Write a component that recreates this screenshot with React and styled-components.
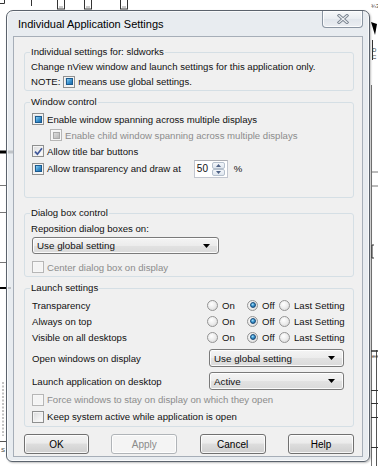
import React from 'react';
import styled, { createGlobalStyle } from 'styled-components';

const Global = createGlobalStyle`
  html, body { margin: 0; padding: 0; background: #fff; }
  body {
    font-family: "Liberation Sans", Arial, sans-serif;
    font-size: 9.6px;
    color: #111;
  }
  * { box-sizing: border-box; }
`;

const Desktop = styled.div`
  position: relative;
  width: 378px;
  height: 466px;
  overflow: hidden;
  background: #fff;
  padding: 10px 0 0 6px;
`;

const Backdrop = styled.svg`
  position: absolute;
  left: 0;
  top: 0;
`;

const Window = styled.div`
  position: relative;
  width: 364px;
  height: 452px;
  border: 1px solid #5b636d;
  border-radius: 7px 7px 6px 6px;
  background: rgba(228, 232, 237, 0.84);
  box-shadow: inset 0 0 0 1px rgba(255, 255, 255, 0.75), 1px 1px 2px rgba(0, 0, 0, 0.25);
  display: flex;
  flex-direction: column;
  padding: 0 6px 6px 6px;
`;

const TitleBar = styled.div`
  height: 25px;
  flex: none;
  display: flex;
  align-items: center;
  justify-content: space-between;
  padding-left: 5px;
`;

const Title = styled.span`
  font-size: 11px;
  color: #000;
  padding-top: 1px;
`;

const CloseButton = styled.div`
  align-self: flex-start;
  width: 41px;
  height: 17px;
  border: 1px solid #8a95a2;
  border-top: none;
  border-radius: 0 0 4px 4px;
  background: linear-gradient(#f6f8fa, #e9edf1 50%, #e1e6ec 51%, #ebeef2);
  box-shadow: inset 0 0 0 1px rgba(255, 255, 255, 0.8);
  display: flex;
  align-items: center;
  justify-content: center;
`;

const Client = styled.div`
  flex: 1;
  border: 1px solid #a6aeb8;
  background: #f0f0f0;
  padding: 9px 8px 2px 10px;
  display: flex;
  flex-direction: column;
`;

const Group = styled.fieldset`
  margin: ${p => p.$mt || 0}px 0 0 0;
  padding: ${p => p.$pt || 0}px 7px ${p => p.$pb || 0}px 7px;
  border: 1px solid #d5dfe5;
  border-radius: 3px;
  min-width: 0;
  display: flex;
  flex-direction: column;
`;

const Legend = styled.legend`
  padding: 0 1px;
  margin-left: -2px;
  line-height: 12px;
  font-size: 9.6px;
`;

const TextLine = styled.div`
  height: ${p => p.$h || 15}px;
  margin-top: ${p => p.$mt || 0}px;
  display: flex;
  align-items: center;
  gap: 3px;
  margin-left: -1px;
  color: ${p => (p.$disabled ? '#8c8c8c' : '#111')};
`;

const CheckRow = styled.div`
  height: ${p => p.$h || 16}px;
  margin-top: ${p => p.$mt || 0}px;
  padding-left: ${p => p.$indent || 0}px;
  display: flex;
  align-items: center;
  gap: 3px;
  color: ${p => (p.$disabled ? '#8c8c8c' : '#111')};
`;

const Box = styled.span`
  width: 12px;
  height: 12px;
  flex: none;
  display: inline-flex;
  align-items: center;
  justify-content: center;
  border: 1px solid ${p => (p.$disabled ? '#b6b6b6' : '#8e8f8f')};
  background: ${p =>
    p.$disabled
      ? '#f4f4f4'
      : 'linear-gradient(135deg, #d9dadb 0%, #f1f1f1 60%, #ffffff 100%)'};
  box-shadow: inset 0 0 0 1px ${p => (p.$disabled ? '#f7f7f7' : '#f4f4f4')};
`;

const Fill = styled.span`
  width: 7px;
  height: 7px;
  border: 1px solid ${p => (p.$disabled ? '#a8a8a8' : '#1c5a8e')};
  background: ${p =>
    p.$disabled
      ? 'linear-gradient(135deg, #dcdcdc, #b8b8b8)'
      : 'linear-gradient(135deg, #8ed0f2 0%, #3a92cf 55%, #1f6aa8 100%)'};
`;

const Check = ({ state, disabled }) => (
  <Box $disabled={disabled}>
    {state === 'mixed' && <Fill $disabled={disabled} />}
    {state === 'checked' && (
      <svg width="9" height="9" viewBox="0 0 9 9">
        <path d="M1 4.6 L3.4 7.2 L8 1.2" fill="none" stroke="#40589a" strokeWidth="1.7" />
      </svg>
    )}
  </Box>
);

const Spinner = styled.div`
  margin-left: 10px;
  width: 34px;
  height: 18px;
  border: 1px solid #c2c6cf;
  border-top-color: #abadb3;
  background: #fff;
  display: flex;
  align-items: center;
  justify-content: space-between;
  padding: 0 2px 0 2px;
`;

const SpinValue = styled.span`
  font-size: 10px;
`;

const SpinButtons = styled.div`
  display: flex;
  flex-direction: column;
  width: 13px;
`;

const SpinButton = styled.div`
  height: 7px;
  border: 1px solid #b5c0cd;
  border-radius: 2px;
  background: linear-gradient(#f3f6fa, #dfe6ee);
  display: flex;
  align-items: center;
  justify-content: center;
`;

const Percent = styled.span`
  margin-left: 3px;
`;

const Combo = styled.div`
  width: ${p => p.$w}px;
  height: ${p => p.$h || 18}px;
  margin-top: ${p => p.$mt || 0}px;
  border: 1px solid #7a7a7a;
  border-radius: 3px;
  background: linear-gradient(#f4f4f4 0%, #ececec 50%, #e2e2e2 51%, #dadada 100%);
  box-shadow: inset 0 0 0 1px rgba(255, 255, 255, 0.85);
  display: flex;
  align-items: center;
  justify-content: space-between;
  padding: 0 8px 0 4px;
  font-size: 9.8px;
  flex: none;
`;

const Arrow = () => (
  <svg width="7" height="4" viewBox="0 0 7 4">
    <path d="M0 0 H7 L3.5 4 Z" fill="#000" />
  </svg>
);

const RadioRow = styled.div`
  height: 16px;
  display: grid;
  grid-template-columns: 175px 40px 32px 1fr;
  align-items: center;
`;

const RadioItem = styled.span`
  display: flex;
  align-items: center;
  gap: 4px;
`;

const Circle = styled.span`
  width: 11px;
  height: 11px;
  border-radius: 50%;
  flex: none;
  border: 1px solid #949494;
  background: radial-gradient(circle at 40% 35%, #ffffff 0%, #ececec 50%, #d2d2d2 100%);
  display: inline-flex;
  align-items: center;
  justify-content: center;
`;

const Dot = styled.span`
  width: 6px;
  height: 6px;
  border-radius: 50%;
  border: 1px solid #174a78;
  background: radial-gradient(circle at 40% 35%, #a9e1fa 0%, #3b98d2 45%, #144f84 100%);
`;

const SelectRow = styled.div`
  margin-top: ${p => p.$mt || 0}px;
  display: grid;
  grid-template-columns: 177px 1fr;
  align-items: center;
`;

const ButtonBar = styled.div`
  margin-top: 7px;
  display: flex;
  justify-content: space-between;
`;

const Button = styled.div`
  width: ${p => p.$w || 65}px;
  height: 20px;
  border: 1px solid ${p => (p.$disabled ? '#b0b4b8' : '#707070')};
  border-radius: 3px;
  background: ${p =>
    p.$disabled
      ? '#f4f4f4'
      : 'linear-gradient(#f3f3f3 0%, #ebebeb 45%, #dddddd 50%, #cfcfcf 100%)'};
  box-shadow: inset 0 0 0 1px rgba(255, 255, 255, 0.8);
  color: ${p => (p.$disabled ? '#8a8a8a' : '#000')};
  display: flex;
  align-items: center;
  justify-content: center;
  font-size: 10px;
`;

const Radio = ({ on, label }) => (
  <RadioItem>
    <Circle>{on && <Dot />}</Circle>
    {label}
  </RadioItem>
);

const LaunchRow = ({ label }) => (
  <RadioRow>
    <span>{label}</span>
    <Radio label="On" />
    <Radio label="Off" on />
    <Radio label="Last Setting" />
  </RadioRow>
);

const CadBackdrop = () => (
  <Backdrop width="378" height="466" viewBox="0 0 378 466">
    <g stroke="#333" fill="none" strokeWidth="1">
      <path d="M0 3.5 H4.5 V0" />
      <path d="M31.5 0 V6" />
      <rect x="57.5" y="-1" width="7" height="10" />
      <rect x="84.5" y="-1" width="7" height="10" />
      <rect x="120.5" y="-1" width="7" height="10" />
      <path d="M59 7 H63 M86 7 H90 M122 7 H126" stroke="#999" />
      <path d="M372.5 40 V60" />
      <path d="M371.5 85 V466" stroke="#777" />
      <path d="M376.5 350 V466" stroke="#555" />
      <path d="M371 351 H378" strokeWidth="1.5" />
      <path d="M371 390.5 H378 M371 403.5 H378 M371 417.5 H378 M371 447.5 H378" />
      <path d="M374 245 H372 V258 H374" />
      <path d="M371 172 H378 M371 186 H378" stroke="#777" />
      <path d="M0 185.5 H7 M0 212.5 H7 M0 262.5 H7" stroke="#777" />
      <path d="M0 441.5 H7" stroke="#555" />
      <path d="M3 382 V436" stroke="#888" strokeDasharray="2 1.5" />
    </g>
    <path d="M0 152 H13" stroke="#000" strokeWidth="3" />
    <path d="M0 288 H11" stroke="#000" strokeWidth="2" />
    <path d="M371 22 L377 24 L375 35 Z" fill="#000" />
    <g fill="#333" fontSize="6" fontFamily="Liberation Sans, Arial, sans-serif">
      <text x="371" y="8">¾3</text>
      <text x="372" y="52">D</text>
      <text x="372" y="59">C</text>
      <text x="372" y="358">ee</text>
      <text x="1" y="452">S</text>
    </g>
  </Backdrop>
);

export default function App() {
  return (
    <>
      <Global />
      <Desktop>
        <CadBackdrop />
        <Window>
          <TitleBar>
            <Title>Individual Application Settings</Title>
            <CloseButton>
              <svg width="12" height="10" viewBox="0 0 12 10">
                <path d="M2 1.5 L10 8.5 M10 1.5 L2 8.5" stroke="#7a8490" strokeWidth="3" strokeLinecap="square" />
                <path d="M2 1.5 L10 8.5 M10 1.5 L2 8.5" stroke="#eef1f4" strokeWidth="1.2" strokeLinecap="square" />
              </svg>
            </CloseButton>
          </TitleBar>
          <Client>
            <Group $pt={1} $pb={1}>
              <Legend>Individual settings for: sldworks</Legend>
              <TextLine>Change nView window and launch settings for this application only.</TextLine>
              <TextLine>
                NOTE:
                <Check state="mixed" />
                means use global settings.
              </TextLine>
            </Group>

            <Group $mt={5} $pt={3} $pb={19}>
              <Legend>Window control</Legend>
              <CheckRow>
                <Check state="mixed" />
                Enable window spanning across multiple displays
              </CheckRow>
              <CheckRow $indent={18} $disabled>
                <Check state="mixed" disabled />
                Enable child window spanning across multiple displays
              </CheckRow>
              <CheckRow>
                <Check state="checked" />
                Allow title bar buttons
              </CheckRow>
              <CheckRow $h={19}>
                <Check state="mixed" />
                Allow transparency and draw at
                <Spinner>
                  <SpinValue>50</SpinValue>
                  <SpinButtons>
                    <SpinButton>
                      <svg width="5" height="3" viewBox="0 0 5 3"><path d="M0 3 L2.5 0 L5 3 Z" fill="#4d6185" /></svg>
                    </SpinButton>
                    <SpinButton>
                      <svg width="5" height="3" viewBox="0 0 5 3"><path d="M0 0 L2.5 3 L5 0 Z" fill="#4d6185" /></svg>
                    </SpinButton>
                  </SpinButtons>
                </Spinner>
                <Percent>%</Percent>
              </CheckRow>
            </Group>

            <Group $mt={9} $pt={2} $pb={1}>
              <Legend>Dialog box control</Legend>
              <TextLine $h={14}>Reposition dialog boxes on:</TextLine>
              <Combo $w={187} $h={17} $mt={2}>
                Use global setting
                <Arrow />
              </Combo>
              <CheckRow $mt={5} $disabled>
                <Check disabled />
                Center dialog box on display
              </CheckRow>
            </Group>

            <Group $mt={5} $pt={3} $pb={1}>
              <Legend>Launch settings</Legend>
              <LaunchRow label="Transparency" />
              <LaunchRow label="Always on top" />
              <LaunchRow label="Visible on all desktops" />
              <SelectRow $mt={4}>
                <span>Open windows on display</span>
                <Combo $w={135}>
                  Use global setting
                  <Arrow />
                </Combo>
              </SelectRow>
              <SelectRow $mt={5}>
                <span>Launch application on desktop</span>
                <Combo $w={135}>
                  Active
                  <Arrow />
                </Combo>
              </SelectRow>
              <CheckRow $h={17} $mt={1} $disabled>
                <Check disabled />
                Force windows to stay on display on which they open
              </CheckRow>
              <CheckRow $h={17}>
                <Check />
                Keep system active while application is open
              </CheckRow>
            </Group>

            <ButtonBar>
              <Button>OK</Button>
              <Button $w={66} $disabled>Apply</Button>
              <Button $w={66}>Cancel</Button>
              <Button $w={66}>Help</Button>
            </ButtonBar>
          </Client>
        </Window>
      </Desktop>
    </>
  );
}
